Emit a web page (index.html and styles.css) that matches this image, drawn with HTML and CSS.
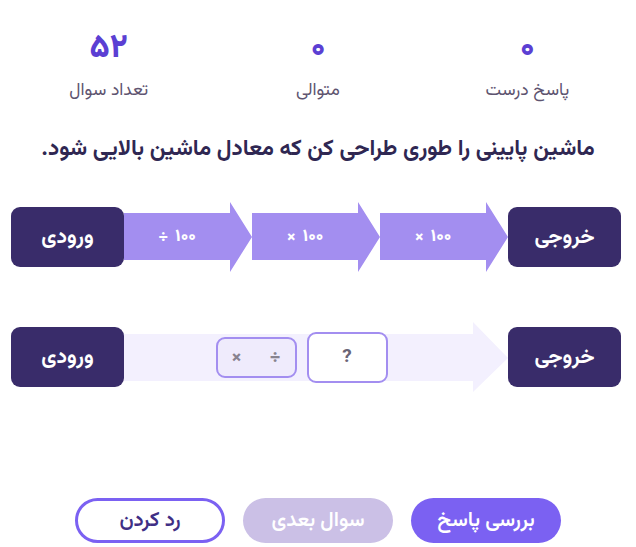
FILE: index.html
```html
<!DOCTYPE html>
<html lang="fa" dir="rtl">
<head>
<meta charset="utf-8">
<title>ماشین</title>
<link rel="stylesheet" href="styles.css">
</head>
<body>
<div class="page">
  <div class="stats">
    <div class="stat"><div class="num">۰</div><div class="label">پاسخ درست</div></div>
    <div class="stat"><div class="num">۰</div><div class="label">متوالی</div></div>
    <div class="stat"><div class="num">۵۲</div><div class="label">تعداد سوال</div></div>
  </div>
  <h1 class="question">ماشین پایینی را طوری طراحی کن که معادل ماشین بالایی شود.</h1>

  <div class="machine">
    <div class="box">ورودی</div>
    <div class="arrow"><span class="op" dir="ltr">÷ ۱۰۰</span></div>
    <div class="arrow"><span class="op" dir="ltr">× ۱۰۰</span></div>
    <div class="arrow"><span class="op" dir="ltr">× ۱۰۰</span></div>
    <div class="box">خروجی</div>
  </div>

  <div class="machine">
    <div class="box">ورودی</div>
    <div class="track">
      <div class="track-bg"></div>
      <div class="slots">
        <div class="chip" dir="ltr"><span>×</span><span>÷</span></div>
        <div class="slot">?</div>
      </div>
    </div>
    <div class="box">خروجی</div>
  </div>

  <div class="actions">
    <button class="btn primary">بررسی پاسخ</button>
    <button class="btn disabled">سوال بعدی</button>
    <button class="btn outline">رد کردن</button>
  </div>
</div>
</body>
</html>
```
FILE: styles.css
```css
* { box-sizing: border-box; }
html, body { margin: 0; padding: 0; background: #ffffff; }
body {
  font-family: "Vazirmatn", "Noto Sans Arabic", "DejaVu Sans", sans-serif;
  color: #2f2752;
}
.page { width: 636px; height: 547px; overflow: hidden; }

.stats {
  display: grid;
  grid-template-columns: repeat(3, 1fr);
  padding: 30px 4px 0 4px;
}
.stat { display: flex; flex-direction: column; align-items: center; }
.num {
  height: 38px; line-height: 38px;
  font-size: 33px; font-weight: 800; color: #5b3fd3;
}
.label {
  margin-top: 11px; height: 24px; line-height: 24px;
  font-size: 17.5px; color: #5e5470;
}
.question {
  margin: 32px 0 0 0; height: 30px; line-height: 30px;
  font-size: 22.4px; font-weight: 700; text-align: center; color: #2f2752;
}

.machine {
  direction: ltr;
  display: flex; align-items: center;
  height: 70px;
  margin: 37px 15px 0 11px;
}
.machine + .machine { margin-top: 50px; }
.box {
  width: 113px; height: 60px; flex: none;
  background: #392c6a; border-radius: 9px;
  color: #fff; font-size: 21px; font-weight: 700;
  display: flex; align-items: center; justify-content: center;
  direction: rtl;
}
.arrow {
  flex: 1; height: 70px;
  background: #a38ef0;
  clip-path: polygon(0 11px, calc(100% - 22px) 11px, calc(100% - 22px) 0, 100% 35px, calc(100% - 22px) 70px, calc(100% - 22px) 58px, 0 58px);
  display: flex; align-items: center; justify-content: center;
  padding-right: 22px;
}
.op { color: #fff; font-size: 17px; font-weight: 800; word-spacing: 3px; }

.track { flex: 1; height: 70px; position: relative; display: flex; }
.track-bg {
  position: absolute; inset: 0;
  background: #f3f0fe;
  clip-path: polygon(0 12px, calc(100% - 35px) 12px, calc(100% - 35px) 0, 100% 36px, calc(100% - 35px) 70px, calc(100% - 35px) 59px, 0 59px);
}
.slots {
  position: relative;
  flex: 1; padding-right: 29px;
  display: flex; align-items: center; justify-content: center; gap: 10px;
  direction: ltr;
}
.chip {
  width: 81px; height: 41px;
  border: 2px solid #a38ef0; border-radius: 9px; background: #efebfc;
  display: flex; align-items: center; justify-content: center; gap: 28px;
  color: #88838f; font-size: 19px; font-weight: 800;
}
.slot {
  width: 81px; height: 51px;
  border: 2px solid #a38ef0; border-radius: 9px; background: #ffffff;
  display: flex; align-items: center; justify-content: center;
  color: #6a6576; font-size: 19px; font-weight: 700;
}

.actions {
  margin-top: 106px;
  display: flex; justify-content: center; gap: 18px;
}
.btn {
  width: 150px; height: 45px; border-radius: 23px;
  font-family: inherit; font-size: 20.5px; font-weight: 600;
  border: none; padding: 0;
}
.primary { background: #7b61f2; color: #fff; }
.disabled { background: #cbc0e6; color: #fff; }
.outline { background: #fff; border: 3px solid #7b61f2; color: #3f2f85; }
```
